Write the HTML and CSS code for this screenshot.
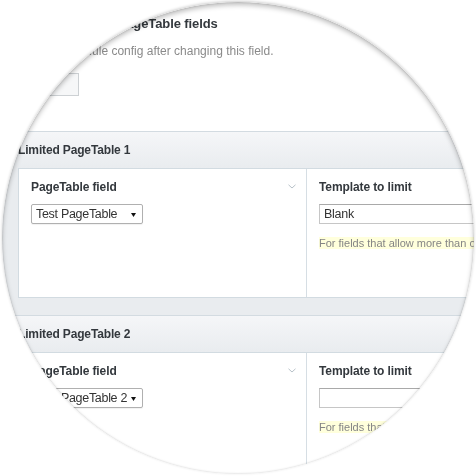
FILE: index.html
```html
<!DOCTYPE html>
<html>
<head>
<meta charset="utf-8">
<link rel="stylesheet" href="styles.css">
</head>
<body>
<div class="lens">
  <div class="page">
    <section class="top-field">
      <h2 class="field-label">Number of Limited PageTable fields</h2>
      <p class="field-desc">Save the module config after changing this field.</p>
      <div class="num-input"></div>
    </section>

    <section class="fieldset">
      <div class="fs-header">Limited PageTable 1</div>
      <div class="fs-panel">
        <div class="col col-left">
          <div class="col-head">
            <span class="lbl">PageTable field</span>
            <svg class="toggle" width="8" height="5" viewBox="0 0 8 5"><polyline points="0.5,0.8 4,4 7.5,0.8" fill="none" stroke="#b7c1c8" stroke-width="1"/></svg>
          </div>
          <div class="select"><span>Test PageTable</span><svg class="caret" width="5" height="4" viewBox="0 0 5 4"><polygon points="0,0 5,0 2.5,4" fill="#111"/></svg></div>
        </div>
        <div class="col col-right">
          <div class="col-head"><span class="lbl">Template to limit</span></div>
          <div class="text-input">Blank</div>
          <p class="notes"><span class="hl">For fields that allow more than one page, limit to this template.</span></p>
        </div>
      </div>
    </section>

    <section class="fieldset">
      <div class="fs-header">Limited PageTable 2</div>
      <div class="fs-panel">
        <div class="col col-left">
          <div class="col-head">
            <span class="lbl">PageTable field</span>
            <svg class="toggle" width="8" height="5" viewBox="0 0 8 5"><polyline points="0.5,0.8 4,4 7.5,0.8" fill="none" stroke="#b7c1c8" stroke-width="1"/></svg>
          </div>
          <div class="select"><span>Test PageTable 2</span><svg class="caret" width="5" height="4" viewBox="0 0 5 4"><polygon points="0,0 5,0 2.5,4" fill="#111"/></svg></div>
        </div>
        <div class="col col-right">
          <div class="col-head"><span class="lbl">Template to limit</span></div>
          <div class="text-input"></div>
          <p class="notes"><span class="hl">For fields that allow more than one page, limit to this template.</span></p>
        </div>
      </div>
    </section>
  </div>
</div>
</body>
</html>
```

FILE: styles.css
```css
html, body {
  margin: 0;
  padding: 0;
  background: #ffffff;
}
body {
  width: 476px;
  height: 476px;
  overflow: hidden;
  font-family: "Liberation Sans", Arial, sans-serif;
  color: #33383d;
}
.lens {
  position: relative;
  width: 472px;
  height: 472px;
  margin: 2px;
  border-radius: 50%;
  overflow: hidden;
  background: #ffffff;
  box-shadow: 0 -1px 3px rgba(0, 0, 0, 0.2);
}
.lens::after {
  content: "";
  position: absolute;
  inset: 0;
  border-radius: 50%;
  box-shadow: inset 0 3px 5px rgba(0, 0, 0, 0.25), inset 0 0 2px rgba(0, 0, 0, 0.2);
  pointer-events: none;
}
.page {
  width: 700px;
  filter: blur(0.35px);
}

/* top field */
.top-field {
  padding: 14px 0 35px 16px;
  background: #ffffff;
}
.field-label {
  margin: 0 0 0 -17px;
  font-size: 13px;
  line-height: 16px;
  font-weight: bold;
  color: #33383d;
  letter-spacing: -0.1px;
}
.field-desc {
  margin: 11px 0 0;
  font-size: 12px;
  line-height: 16px;
  color: #8a8a8a;
}
.num-input {
  margin-top: 14px;
  width: 61px;
  height: 23px;
  box-sizing: border-box;
  border: 1px solid #cdd1d4;
  background: #f6f7f8;
}

/* fieldsets */
.fieldset {
  border-top: 1px solid #d3dbe1;
  background: #e9ecef;
  padding: 0 16px 17px;
}
.fs-header {
  margin: 0 -16px;
  padding: 10px 0 10px 16px;
  font-size: 12px;
  line-height: 16px;
  font-weight: bold;
  letter-spacing: -0.15px;
  color: #33383d;
  background: linear-gradient(#f5f6f8, #e9ecef);
}
.fs-panel {
  display: flex;
  width: 640px;
  background: #ffffff;
  border: 1px solid #d2dbe1;
}
.col {
  box-sizing: border-box;
  padding: 10px 10px 48px 12px;
}
.col-left {
  width: 287px;
}
.col-right {
  flex: 1;
  border-left: 1px solid #d6dee4;
}
.col-head {
  display: flex;
  justify-content: space-between;
  align-items: center;
  height: 16px;
}
.lbl {
  font-size: 12px;
  line-height: 16px;
  font-weight: bold;
  letter-spacing: -0.1px;
  color: #33383d;
}
.toggle {
  display: block;
  margin-top: -2px;
}
.select {
  margin-top: 9px;
  width: 112px;
  height: 20px;
  box-sizing: border-box;
  border: 1px solid #b0b0b0;
  border-radius: 2px;
  background: #ffffff;
  display: flex;
  align-items: center;
  justify-content: space-between;
  padding: 0 6px 0 4px;
  font-size: 12.5px;
  letter-spacing: -0.3px;
  color: #333333;
  box-shadow: 0 1px 1px rgba(0, 0, 0, 0.06);
}
.caret {
  display: block;
  margin-top: 1px;
}
.text-input {
  margin-top: 9px;
  width: 320px;
  height: 20px;
  box-sizing: border-box;
  border: 1px solid #c6c6c6;
  border-top-color: #a9a9a9;
  background: #ffffff;
  padding-left: 4px;
  font-size: 12.5px;
  line-height: 18px;
  letter-spacing: -0.25px;
  color: #333333;
}
.notes {
  margin: 13px 0 0;
  font-size: 11px;
  line-height: 12px;
  color: #858585;
  white-space: nowrap;
}
.hl {
  background: #ffffdc;
}
```
